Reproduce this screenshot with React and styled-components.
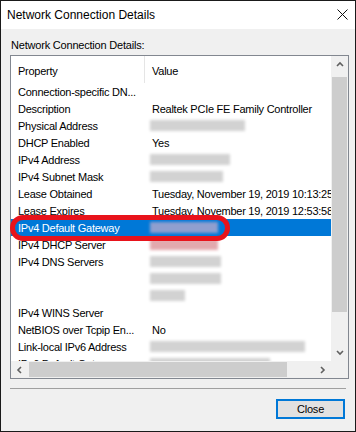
import React from 'react';
import styled, { createGlobalStyle } from 'styled-components';

const GlobalStyle = createGlobalStyle`
  html, body {
    margin: 0;
    padding: 0;
    background: #fff;
  }
  body {
    font-family: "Liberation Sans", Arial, sans-serif;
  }
`;

const Window = styled.div`
  width: 356px;
  height: 432px;
  box-sizing: border-box;
  border: 1px solid #1a1a1a;
  background: #f0f0f0;
  display: flex;
  flex-direction: column;
  overflow: hidden;
`;

const TitleBar = styled.div`
  height: 28px;
  flex: none;
  background: #fff;
  display: flex;
  align-items: center;
  justify-content: space-between;
  padding: 0 7px 0 6px;
  font-size: 12px;
  color: #000;
`;

const CloseX = styled.svg`
  width: 11px;
  height: 11px;
  margin-top: -1px;
  margin-right: 0px;
`;

const Body = styled.div`
  flex: 1;
  display: flex;
  flex-direction: column;
  padding: 10px 6px 0 9px;
`;

const Label = styled.div`
  font-size: 11px;
  letter-spacing: -0.2px;
  line-height: 13px;
  height: 13px;
  margin-bottom: 3px;
  padding-left: 1px;
  color: #000;
`;

const ListBox = styled.div`
  position: relative;
  width: 339px;
  height: 324px;
  box-sizing: border-box;
  border: 1px solid #828790;
  background: #fff;
  display: grid;
  grid-template-columns: 320px 17px;
  grid-template-rows: 305px 17px;
`;

const Content = styled.div`
  overflow: hidden;
  font-size: 11px;
  letter-spacing: -0.25px;
  color: #000;
`;

const Header = styled.div`
  height: 27px;
  display: flex;
  align-items: stretch;
  white-space: nowrap;
`;

const HeaderCell = styled.div`
  width: ${(p) => (p.$w ? `${p.$w}px` : 'auto')};
  flex: ${(p) => (p.$w ? 'none' : '1')};
  box-sizing: border-box;
  padding: 3px 0 0 7px;
  display: flex;
  align-items: center;
  border-right: ${(p) => (p.$w ? '1px solid #e5e5e5' : 'none')};
`;

const Row = styled.div`
  height: 17px;
  display: flex;
  align-items: center;
  white-space: nowrap;
  background: ${(p) => (p.$selected ? '#0078d7' : 'transparent')};
  color: ${(p) => (p.$selected ? '#fff' : '#000')};
`;

const PropCell = styled.div`
  width: 134px;
  flex: none;
  box-sizing: border-box;
  padding-left: 7px;
  overflow: hidden;
`;

const ValueCell = styled.div`
  flex: none;
  padding-left: 7px;
`;

const Blur = styled.span`
  display: block;
  width: ${(p) => p.$w}px;
  height: 11px;
  margin-left: -2px;
  background: ${(p) => p.$tone || '#d2d2d2'};
  filter: blur(1.6px);
`;

const VScroll = styled.div`
  background: #f0f0f0;
  display: flex;
  flex-direction: column;
`;

const HScroll = styled.div`
  background: #f0f0f0;
  display: flex;
  flex-direction: row;
`;

const ArrowBtn = styled.div`
  width: 17px;
  height: 17px;
  flex: none;
  display: flex;
  align-items: center;
  justify-content: center;
`;

const VThumb = styled.div`
  width: 15px;
  height: 235px;
  margin: 4px 1px 0;
  background: #cdcdcd;
`;

const HThumb = styled.div`
  width: 258px;
  height: 15px;
  margin: 1px 0 0 1px;
  background: #cdcdcd;
`;

const Spacer = styled.div`
  flex: 1;
`;

const Corner = styled.div`
  background: #f0f0f0;
`;

const Marker = styled.div`
  position: absolute;
  left: -1px;
  top: 159px;
  width: 220px;
  height: 26px;
  box-sizing: border-box;
  border: 5px solid #e8131b;
  border-radius: 13px;
  pointer-events: none;
`;

const Separator = styled.div`
  width: 336px;
  height: 1px;
  margin-top: 9px;
  background: #a0a0a0;
`;

const Footer = styled.div`
  width: 336px;
  display: flex;
  justify-content: flex-end;
  margin-top: 10px;
`;

const Button = styled.button`
  width: 69px;
  height: 20px;
  margin-right: 1px;
  box-sizing: border-box;
  border: 1px solid #0078d7;
  box-shadow: inset 0 0 0 1px #0078d7;
  background: #e1e1e1;
  font-family: "Liberation Sans", Arial, sans-serif;
  font-size: 11px;
  letter-spacing: -0.2px;
  color: #000;
  padding: 0;
`;

const Chevron = ({ dir }) => {
  const pts = {
    up: '1,5 4,2 7,5',
    down: '1,2 4,5 7,2',
    left: '5,1 2,4 5,7',
    right: '2,1 5,4 2,7',
  }[dir];
  return (
    <svg width="8" height="8" viewBox="0 0 8 8">
      <polyline points={pts} fill="none" stroke="#606060" strokeWidth="1.6" />
    </svg>
  );
};

const rows = [
  { p: 'Connection-specific DN...', v: '' },
  { p: 'Description', v: 'Realtek PCIe FE Family Controller' },
  { p: 'Physical Address', blur: 95 },
  { p: 'DHCP Enabled', v: 'Yes' },
  { p: 'IPv4 Address', blur: 80 },
  { p: 'IPv4 Subnet Mask', blur: 73 },
  { p: 'Lease Obtained', v: 'Tuesday, November 19, 2019 10:13:25 AM' },
  { p: 'Lease Expires', v: 'Tuesday, November 19, 2019 12:53:58 PM' },
  { p: 'IPv4 Default Gateway', blur: 68, tone: '#8f9fcf', selected: true },
  { p: 'IPv4 DHCP Server', blur: 68, tone: '#e2a9ae' },
  { p: 'IPv4 DNS Servers', blur: 71 },
  { p: '', blur: 71 },
  { p: '', blur: 35 },
  { p: 'IPv4 WINS Server', v: '' },
  { p: 'NetBIOS over Tcpip En...', v: 'No' },
  { p: 'Link-local IPv6 Address', blur: 155 },
  { p: 'IPv6 Default Gateway', blur: 120 },
];

export default function App() {
  return (
    <>
      <GlobalStyle />
      <Window>
        <TitleBar>
          <span>Network Connection Details</span>
          <CloseX viewBox="0 0 11 11">
            <path d="M0.5 0.5 L10.5 10.5 M10.5 0.5 L0.5 10.5" stroke="#111" strokeWidth="1" />
          </CloseX>
        </TitleBar>
        <Body>
          <Label>Network Connection Details:</Label>
          <ListBox>
            <Content>
              <Header>
                <HeaderCell $w={134}>Property</HeaderCell>
                <HeaderCell>Value</HeaderCell>
              </Header>
              {rows.map((r, i) => (
                <Row key={i} $selected={r.selected}>
                  <PropCell>{r.p}</PropCell>
                  <ValueCell>
                    {r.blur ? <Blur $w={r.blur} $tone={r.tone} /> : r.v}
                  </ValueCell>
                </Row>
              ))}
            </Content>
            <VScroll>
              <ArrowBtn>
                <Chevron dir="up" />
              </ArrowBtn>
              <VThumb />
              <Spacer />
              <ArrowBtn>
                <Chevron dir="down" />
              </ArrowBtn>
            </VScroll>
            <HScroll>
              <ArrowBtn>
                <Chevron dir="left" />
              </ArrowBtn>
              <HThumb />
              <Spacer />
              <ArrowBtn>
                <Chevron dir="right" />
              </ArrowBtn>
            </HScroll>
            <Corner />
            <Marker />
          </ListBox>
          <Separator />
          <Footer>
            <Button>Close</Button>
          </Footer>
        </Body>
      </Window>
    </>
  );
}
